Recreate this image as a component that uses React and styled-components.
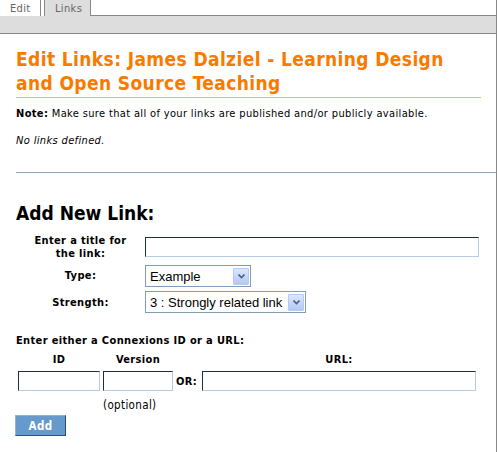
import React from 'react';
import styled, { createGlobalStyle } from 'styled-components';

const GlobalStyle = createGlobalStyle`
  html, body {
    margin: 0;
    padding: 0;
    background: #fff;
  }
  body {
    font-family: "DejaVu Sans", Verdana, sans-serif;
    font-stretch: condensed;
    font-size: 11px;
    letter-spacing: 0.35px;
    color: #000;
  }
`;

const Page = styled.div`
  width: 497px;
  height: 452px;
  display: flex;
  flex-direction: column;
  overflow: hidden;
`;

const TabRow = styled.div`
  display: flex;
  height: 16px;
`;

const Tab = styled.div`
  width: ${p => p.width}px;
  box-sizing: border-box;
  display: flex;
  align-items: center;
  padding-left: ${p => p.pad}px;
  color: #666;
  font-size: 11px;
  background: ${p => (p.active ? '#dddddd' : '#fff')};
  border-left: ${p => (p.active ? '1px solid #888' : 'none')};
  border-right: 1px solid #888;
  margin-right: ${p => (p.active ? 0 : 3)}px;
`;

const TabFill = styled.div`
  flex: 1;
  border-bottom: 1px solid #888;
  border-right: 1px solid #888;
`;

const Strip = styled.div`
  height: 17px;
  background: #dddddd;
  border-bottom: 1px solid #888;
  border-right: 1px solid #888;
`;

const Content = styled.div`
  flex: 1;
  border-right: 1px solid #888;
  padding: 13px 15px 0 16px;
`;

const Title = styled.h1`
  margin: 0;
  font-size: 19px;
  line-height: 24px;
  letter-spacing: 0.38px;
  font-weight: bold;
  color: #f77b00;
  border-bottom: 1px solid #f3c13a;
  padding-bottom: 2px;
`;

const Note = styled.p`
  margin: 9px 0 0;
  line-height: 14px;
`;

const Empty = styled.p`
  margin: 13px 0 0;
  font-style: italic;
  line-height: 14px;
`;

const Rule = styled.hr`
  margin: 24px -15px 0 0;
  border: none;
  border-top: 1px solid #8aa6b8;
`;

const SubTitle = styled.h2`
  margin: 29px 0 0;
  font-size: 19px;
  line-height: 22px;
  letter-spacing: 0;
  font-weight: bold;
`;

const FormGrid = styled.div`
  display: grid;
  grid-template-columns: 123px auto;
  column-gap: 6px;
  row-gap: 4px;
  margin-top: 10px;
  align-items: center;
`;

const Label = styled.label`
  font-weight: bold;
  text-align: center;
  line-height: 13px;
  padding-left: 6px;
`;

const TextBox = styled.input`
  box-sizing: border-box;
  width: ${p => p.width}px;
  height: 20px;
  margin: 0;
  padding: 1px 3px;
  font-family: "Liberation Sans", Arial, sans-serif;
  font-size: 13px;
  border: 1px solid;
  border-color: #1f2f40 #b8cce0 #b8cce0 #1f2f40;
  background: #fff;
  outline: none;
`;

const SelectBox = styled.div`
  box-sizing: border-box;
  width: ${p => p.width}px;
  height: 22px;
  margin-top: ${p => p.shift || 0}px;
  display: flex;
  align-items: center;
  justify-content: space-between;
  border: 1px solid #7f9db9;
  padding: 1px 1px 1px 4px;
  font-family: "Liberation Sans", Arial, sans-serif;
  font-stretch: normal;
  font-size: 13px;
  letter-spacing: 0;
  background: #fff;
`;

const DropButton = styled.span`
  box-sizing: border-box;
  width: 16px;
  height: 17px;
  border: 1px solid #b6c9f4;
  border-radius: 1px;
  background: linear-gradient(#dbe6fe, #b4c8f6);
  display: flex;
  align-items: center;
  justify-content: center;
`;

const Chevron = () => (
  <svg width="7" height="5" viewBox="0 0 7 5">
    <path d="M0.5 0.5 L3.5 3.5 L6.5 0.5" fill="none" stroke="#4d6185" strokeWidth="1.6" />
  </svg>
);

const Select = ({ width, shift, children }) => (
  <SelectBox width={width} shift={shift}>
    <span>{children}</span>
    <DropButton>
      <Chevron />
    </DropButton>
  </SelectBox>
);

const Lead = styled.div`
  margin-top: 21px;
  font-weight: bold;
  line-height: 14px;
`;

const IdGrid = styled.div`
  display: grid;
  grid-template-columns: 82px 70px 23px 274px;
  column-gap: 3px;
  margin: 5px 0 0 2px;
  align-items: center;
`;

const Head = styled.div`
  font-weight: bold;
  text-align: center;
  line-height: 14px;
  padding-bottom: 4px;
`;

const OrText = styled.div`
  font-weight: bold;
`;

const Hint = styled.div`
  grid-column: 2 / 3;
  line-height: 14px;
  padding-top: 7px;
  font-size: 11.5px;
`;

const AddButton = styled.button`
  margin: 3px 0 0 -1px;
  width: 51px;
  height: 21px;
  background: #6699cc;
  color: #fff;
  font-family: "DejaVu Sans", Verdana, sans-serif;
  font-stretch: condensed;
  font-size: 11.5px;
  letter-spacing: 0.35px;
  font-weight: bold;
  border: 1px solid;
  border-color: #8fb3d9 #2d4f73 #2d4f73 #8fb3d9;
  padding: 0;
`;

export default function App() {
  return (
    <Page>
      <GlobalStyle />
      <TabRow>
        <Tab width={41} pad={10}>Edit</Tab>
        <Tab width={47} pad={10} active>Links</Tab>
        <TabFill />
      </TabRow>
      <Strip />
      <Content>
        <Title>Edit Links: James Dalziel - Learning Design and Open Source Teaching</Title>
        <Note>
          <b>Note:</b> Make sure that all of your links are published and/or publicly available.
        </Note>
        <Empty>No links defined.</Empty>
        <Rule />
        <SubTitle>Add New Link:</SubTitle>
        <FormGrid>
          <Label>Enter a title for<br />the link:</Label>
          <TextBox width={334} />
          <Label>Type:</Label>
          <Select width={106} shift={1}>Example</Select>
          <Label>Strength:</Label>
          <Select width={161}>3 : Strongly related link</Select>
        </FormGrid>
        <Lead>Enter either a Connexions ID or a URL:</Lead>
        <IdGrid>
          <Head>ID</Head>
          <Head>Version</Head>
          <div />
          <Head>URL:</Head>
          <TextBox width={82} />
          <TextBox width={70} />
          <OrText>OR:</OrText>
          <TextBox width={274} />
          <Hint>(optional)</Hint>
        </IdGrid>
        <AddButton>Add</AddButton>
      </Content>
    </Page>
  );
}
